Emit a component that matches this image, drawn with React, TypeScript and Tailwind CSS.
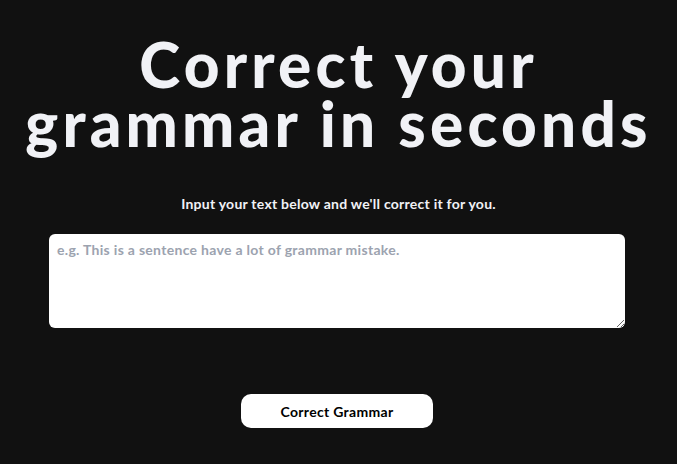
import { useState } from "react";

export default function App() {
  const [text, setText] = useState("");

  return (
    <div
      className="min-h-[464px] w-full bg-[#111111] flex flex-col items-center"
      style={{ fontFamily: "Lato, 'Noto Sans', sans-serif" }}
    >
      <h1 className="mt-[35px] text-center text-[62px] leading-[59px] font-black tracking-[4.2px] text-[#f1f2f6]">
        Correct your
        <br />
        grammar in seconds
      </h1>

      <p className="mt-[40px] text-[14px] font-bold tracking-[0.25px] text-[#f1f2f6]">
        Input your text below and we'll correct it for you.
      </p>

      <textarea
        className="mt-[20px] mr-[3px] w-[576px] h-[94px] rounded-[6px] bg-white px-[8px] pt-[5px] text-[14px] font-bold tracking-[0.3px] text-gray-800 placeholder:text-[#9ca3af] outline-none"
        placeholder="e.g. This is a sentence have a lot of grammar mistake."
        value={text}
        onChange={(e) => setText(e.target.value)}
      />

      <button className="mt-[66px] mr-[3px] w-[192px] h-[34px] rounded-[10px] bg-white text-[14px] font-bold tracking-[0.3px] text-black">
        Correct Grammar
      </button>
    </div>
  );
}
